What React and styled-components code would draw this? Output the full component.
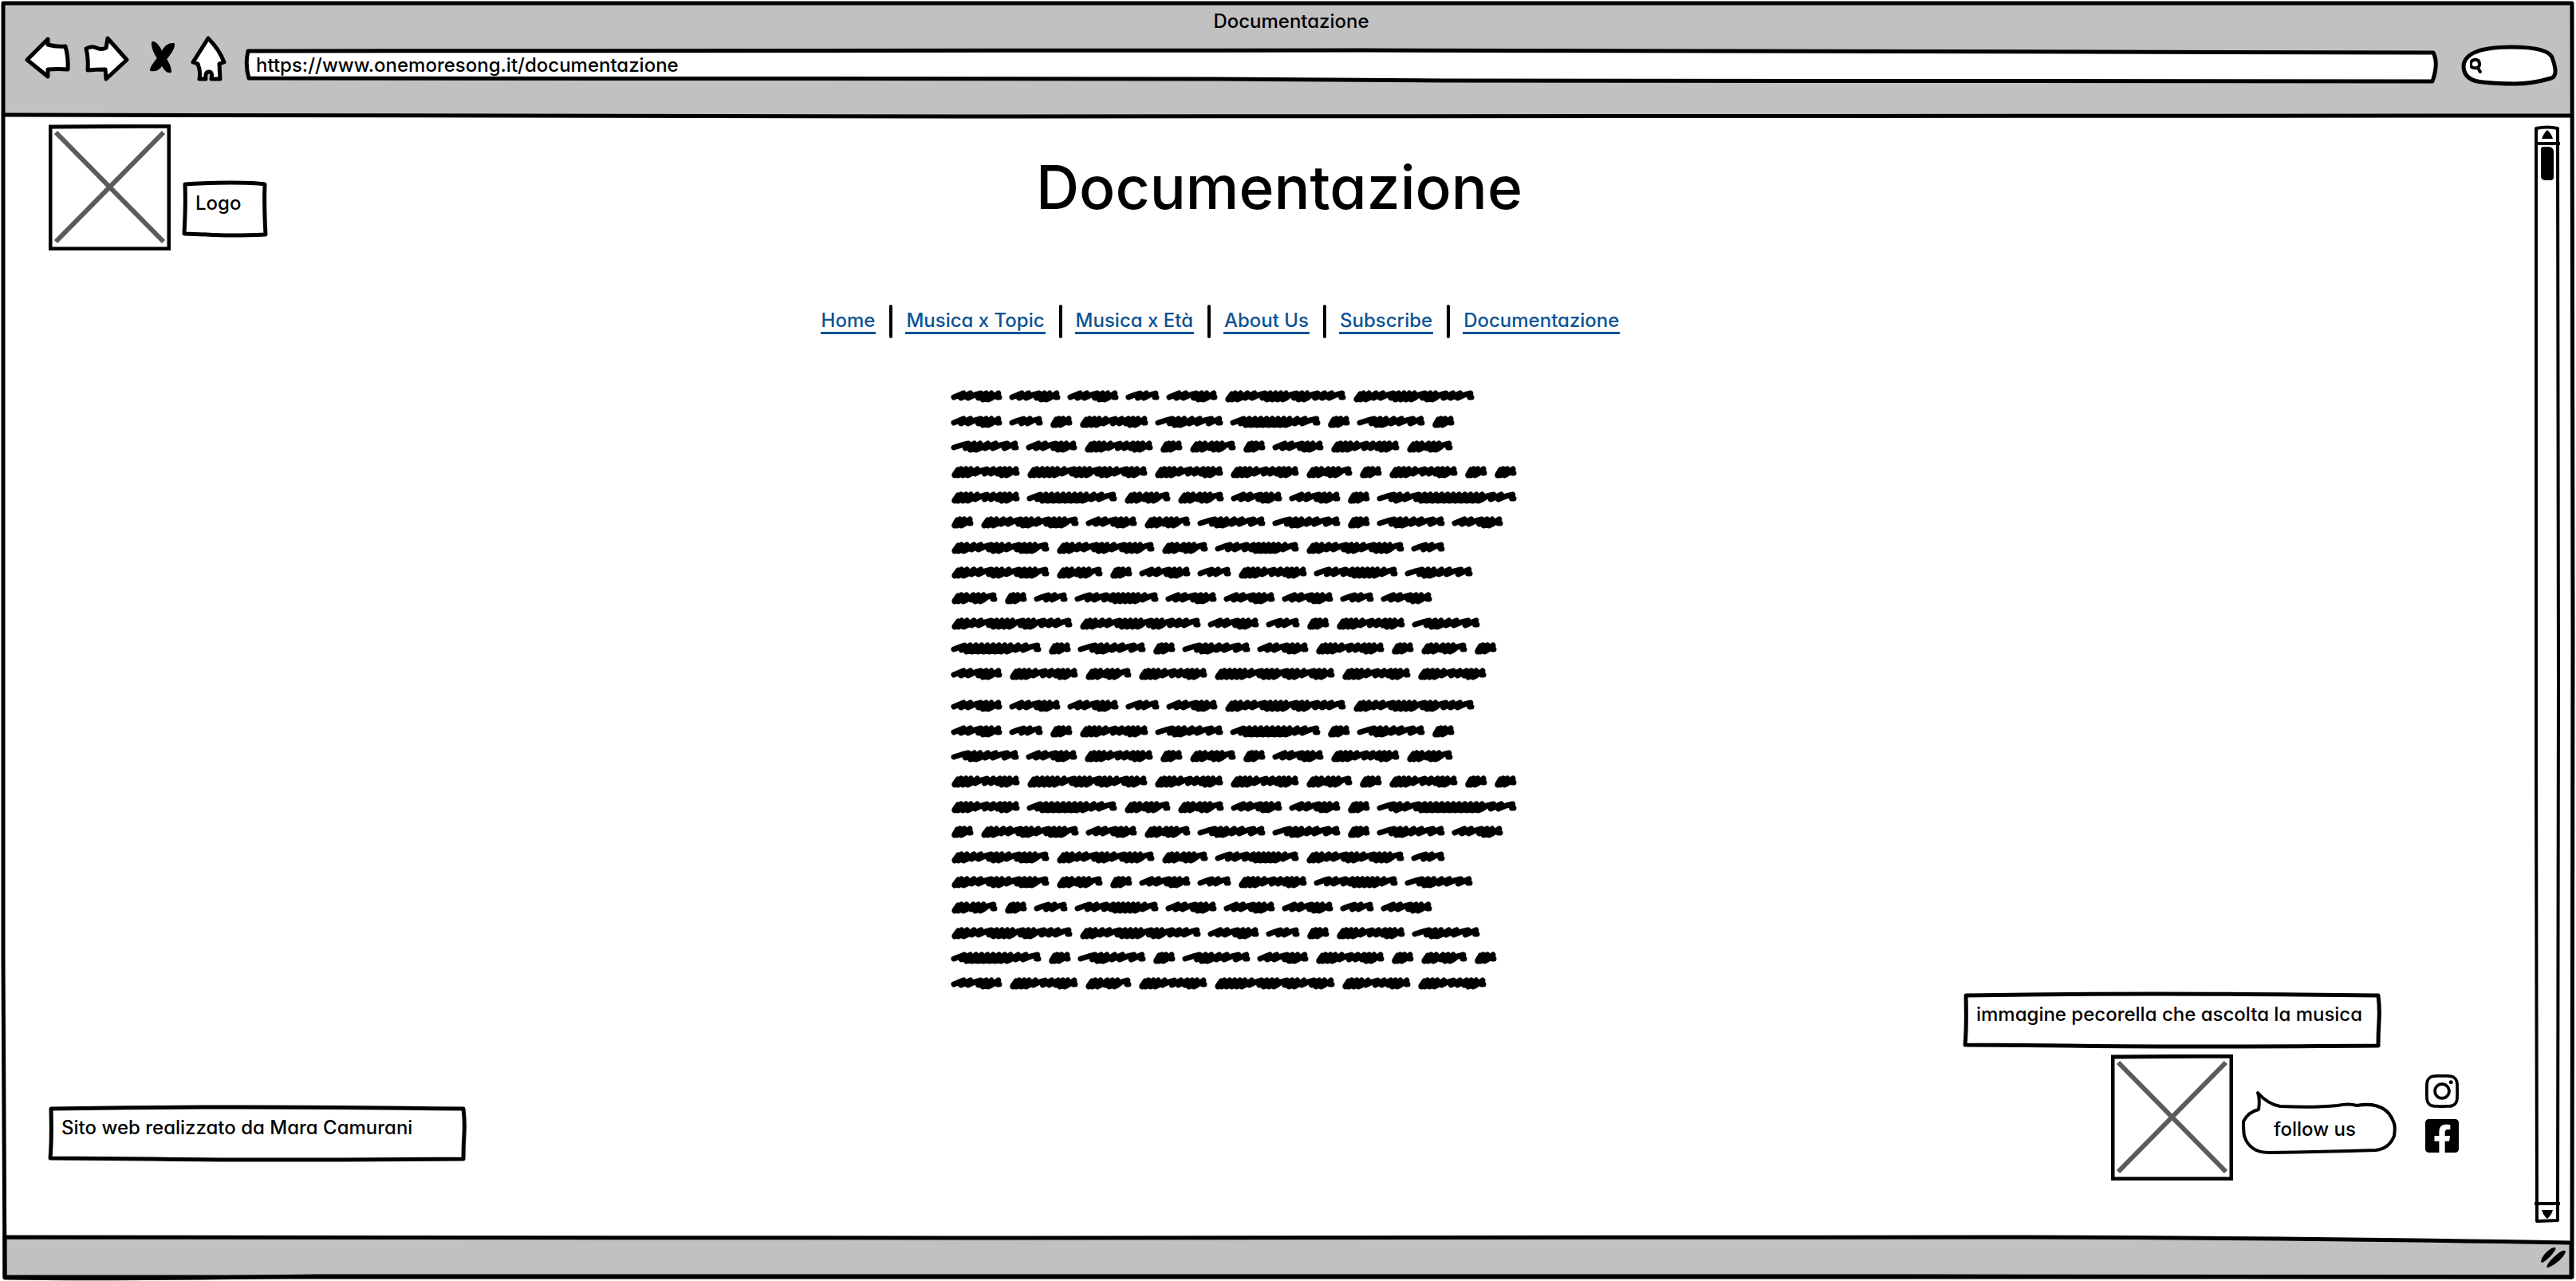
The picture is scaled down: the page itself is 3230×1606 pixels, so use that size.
import React from 'react';
import styled, { createGlobalStyle } from 'styled-components';
import { FaInstagram, FaFacebookSquare } from 'react-icons/fa';

const INK = '#000000';
const CHROME = '#c1c1c1';
const LINK = '#0b5394';

const GlobalStyle = createGlobalStyle`
  *, *::before, *::after { box-sizing: border-box; }
  body {
    margin: 0;
    background: #ffffff;
    color: ${INK};
    font-family: Inter, "Liberation Sans", Arial, sans-serif;
    font-feature-settings: "cv11";
    font-size: 24px;
    font-weight: 500;
    line-height: 32px;
  }
`;

/* Hand-drawn outlines ---------------------------------------------------- */

const OutlineSvg = styled.svg`
  position: absolute;
  inset: 0;
  width: 100%;
  height: 100%;
  overflow: visible;
  pointer-events: none;
  z-index: ${(p) => (p.$behind ? -1 : 1)};
  path {
    fill: ${(p) => p.$fill || 'none'};
    stroke: ${INK};
    stroke-width: ${(p) => p.$weight || 5}px;
    stroke-linejoin: round;
    stroke-linecap: round;
    vector-effect: non-scaling-stroke;
  }
`;

function Outline({ box, d, fill, weight, behind }) {
  return (
    <OutlineSvg
      viewBox={box}
      preserveAspectRatio="none"
      aria-hidden="true"
      $fill={fill}
      $weight={weight}
      $behind={behind}
    >
      <path d={d} />
    </OutlineSvg>
  );
}

/* Browser window ---------------------------------------------------------- */

const Window = styled.div`
  position: relative;
  isolation: isolate;
  display: flex;
  flex-direction: column;
  min-height: 100vh;
  padding: 4px;
`;

const Chrome = styled.header`
  position: relative;
  display: flex;
  flex-direction: column;
  height: 142px;
  padding: 7px 20px 0 28px;
  background: ${CHROME};
`;

const WindowTitle = styled.div`
  text-align: center;
  line-height: 32px;
`;

const Toolbar = styled.div`
  display: flex;
  align-items: flex-start;
`;

const NavButtons = styled.div`
  display: flex;
  align-items: center;
  gap: 18px;
  margin-right: 24px;
`;

const IconButton = styled.button`
  display: block;
  padding: 0;
  border: 0;
  background: none;
  cursor: pointer;
  svg { display: block; overflow: visible; }
`;

const Sketch = styled.path`
  fill: ${(p) => (p.$solid ? INK : '#ffffff')};
  stroke: ${INK};
  stroke-width: ${(p) => p.$weight || 5};
  stroke-linejoin: round;
  stroke-linecap: round;
`;

const AddressField = styled.label`
  position: relative;
  isolation: isolate;
  flex: 1;
  display: flex;
  height: 42px;
  margin: 18px 30px 0 0;
`;

const SearchField = styled.label`
  position: relative;
  isolation: isolate;
  display: flex;
  align-items: center;
  width: 119px;
  height: 50px;
  padding-left: 10px;
  margin-top: 14px;
`;

const BareInput = styled.input`
  width: 100%;
  min-width: 0;
  border: 0;
  outline: 0;
  padding: 0 14px;
  height: 40px;
  background: transparent;
  color: inherit;
  font: inherit;
  font-feature-settings: inherit;
`;

const Body = styled.div`
  flex: 1;
  display: flex;
  background: #ffffff;
`;

const StatusBar = styled.footer`
  display: flex;
  justify-content: flex-end;
  align-items: center;
  height: 51px;
  padding-right: 6px;
  position: relative;
  isolation: isolate;
`;

/* Scroll bar -------------------------------------------------------------- */

const ScrollTrack = styled.div`
  position: relative;
  isolation: isolate;
  display: flex;
  flex-direction: column;
  align-items: center;
  width: 32px;
  margin: 12px 16px 18px 0;
`;

const ScrollThumb = styled.div`
  width: 16px;
  height: 42px;
  margin-top: 2px;
  background: ${INK};
  border-radius: 3px 6px 4px 5px;
`;

const ScrollButton = styled(IconButton)`
  display: flex;
  align-items: center;
  justify-content: center;
  width: 100%;
  height: 24px;
  border: 0 solid ${INK};
  ${(p) => (p.$end ? 'margin-top: auto; border-top-width: 4px; height: 26px;' : 'border-bottom-width: 4px;')}
`;

/* Page -------------------------------------------------------------------- */

const Page = styled.main`
  flex: 1;
  display: flex;
  flex-direction: column;
  padding: 10px 31px 71px 57px;
`;

const TopRow = styled.section`
  display: grid;
  grid-template-columns: 1fr auto 1fr;
  align-items: start;
`;

const Brand = styled.div`
  display: flex;
  align-items: flex-end;
  gap: 15px;
`;

const BrandLabel = styled.div`
  padding-bottom: 17px;
`;

const Title = styled.h1`
  margin: 0;
  padding-top: 33px;
  font-size: 75px;
  font-weight: 500;
  line-height: 92px;
`;

const Picture = styled.svg`
  display: block;
  flex: none;
  width: 153px;
  height: 158px;
`;

const Note = styled.div`
  position: relative;
  isolation: isolate;
  width: ${(p) => (p.$small ? '106px' : '523px')};
  height: 70px;
  padding: 12px 16px;
  white-space: nowrap;
`;

const Menu = styled.nav`
  align-self: center;
  display: flex;
  align-items: center;
  height: 42px;
  margin: 68px 148px 0 0;
`;

const MenuLink = styled.a`
  padding: 0 1px;
  border-bottom: 3px solid ${LINK};
  color: ${LINK};
  line-height: 28px;
  text-decoration: none;
`;

const MenuItem = styled.span`
  display: flex;
  align-items: center;
  & + &::before {
    content: '';
    width: 4px;
    height: 42px;
    margin: 0 16px 0 17px;
    border-radius: 2px;
    background: ${INK};
  }
`;

const Article = styled.section`
  align-self: center;
  display: flex;
  flex-direction: column;
  gap: 26px;
  width: 710px;
  margin: 66px 112px 0 0;
`;

const Paragraph = styled.div`
  display: flex;
  flex-direction: column;
  justify-content: space-between;
  height: 362px;
`;

const Line = styled.div`
  display: flex;
  gap: 9px;
`;

const Word = styled.svg`
  display: block;
  flex: none;
  overflow: visible;
  path {
    fill: none;
    stroke: ${INK};
    stroke-width: 7;
    stroke-linejoin: round;
    stroke-linecap: round;
  }
`;

const BottomRow = styled.section`
  display: flex;
  justify-content: space-between;
  align-items: flex-end;
  margin-top: auto;
  padding-right: 64px;
`;

const Credit = styled.div`
  padding-bottom: 24px;
`;

const Follow = styled.div`
  display: grid;
  grid-template-columns: 185px 153px 11px 194px 36px 42px;
  row-gap: 8px;
`;

const FollowNote = styled.div`
  grid-column: 1 / 5;
`;

const FollowPicture = styled.div`
  grid-column: 2;
`;

const Bubble = styled.div`
  grid-column: 4;
  position: relative;
  isolation: isolate;
  align-self: start;
  height: 79px;
  margin-top: 46px;
  padding: 32px 42px 0 40px;
  white-space: nowrap;
`;

const Social = styled.div`
  grid-column: 6;
  display: flex;
  flex-direction: column;
  gap: 8px;
  padding-top: 22px;
  a {
    display: block;
    height: 48px;
    color: ${INK};
  }
  svg { display: block; margin: 0 -3px; }
`;

/* Scribbled placeholder text ---------------------------------------------- */

const WORDS = {
  A: [64, 'sswdds'],
  B: [42, 'wsw'],
  C: [28, 'Dds'],
  D: [86, 'Dddswssdds'],
  E: [85, 'wddssws'],
  F: [113, 'sddddddddssw'],
  G: [58, 'Ddsddw'],
  H: [152, 'Ddsswddddwddwssw'],
  I: [175, 'wdswdddddddddddwsw'],
  J: [123, 'Ddsswddswdddw'],
  K: [105, 'wswsdddddsw'],
  M: [151, 'Dddddswdddwddswdds'],
};

const LINES = [
  'AAABAHH',
  'ABCDEFCEC',
  'EADCGCADG',
  'DMDDGCDCC',
  'DFGGAACI',
  'CJAGEECEA',
  'JJGKJB',
  'JGCABDKE',
  'GCBKAAABA',
  'HHABCDE',
  'FCECEADCGC',
  'ADGDMDD',
];

function scribble(kind) {
  const [width, steps] = WORDS[kind];
  const pts = [];
  let x = 0;
  if (steps[0] === 'D') pts.push([1, 10], [5, 4], [1, 11], [6, 9]);
  else pts.push([0, 8]);
  for (const step of steps) {
    if (step === 'w') {
      pts.push([x + 8, 5], [x + 15, 3]);
      x += 12;
      pts.push([x, 9]);
    } else if (step === 's') {
      pts.push([x + 11, 3]);
      x += 8;
      pts.push([x, 9]);
    } else {
      pts.push([x + 9, 3]);
      x += 6;
      pts.push([x - 1, 11], [x + 3, 9]);
    }
  }
  pts.pop();
  const last = pts[pts.length - 1];
  pts.push([last[0] - 1, 8], [last[0] + 1, 8]);
  const span = last[0] + 1;
  const scale = (width - 7) / span;
  return pts.map(([px, py], i) => `${i ? 'L' : 'M'}${(3 + px * scale).toFixed(1)} ${py}`).join('');
}

const SHAPES = Object.fromEntries(Object.keys(WORDS).map((k) => [k, scribble(k)]));

function ScribbleParagraph() {
  return (
    <Paragraph role="img" aria-label="Testo">
      {LINES.map((line, i) => (
        <Line key={i}>
          {[...line].map((kind, j) => (
            <Word key={j} width={WORDS[kind][0]} height="14" viewBox={`0 0 ${WORDS[kind][0]} 14`}>
              <path d={SHAPES[kind]} />
            </Word>
          ))}
        </Line>
      ))}
    </Paragraph>
  );
}

/* Parts ------------------------------------------------------------------- */

function PicturePlaceholder({ label }) {
  return (
    <Picture viewBox="0 0 153 158" role="img" aria-label={label}>
      <path d="M2 3L151 2V156H2Z" fill="#fff" stroke={INK} strokeWidth="5" />
      <path d="M9 10L144 147M144 10L9 147" stroke="#5b5b5b" strokeWidth="6" fill="none" />
    </Picture>
  );
}

function NoteBox({ small, children }) {
  const d = small
    ? 'M3 4Q30 2 60 2T103 4Q102 30 104 67Q60 69 30 67L2 66Q4 30 3 4Z'
    : 'M3 4Q120 2 240 2T520 4Q522 20 521 36T520 67Q260 69 130 67L2 66Q4 44 3 4Z';
  return (
    <Note $small={small}>
      <Outline behind box={small ? '0 0 106 70' : '0 0 523 70'} d={d} fill="#fff" />
      {children}
    </Note>
  );
}

const MENU = ['Home', 'Musica x Topic', 'Musica x Età', 'About Us', 'Subscribe', 'Documentazione'];

export default function App() {
  return (
    <>
      <GlobalStyle />
      <Window>
        <Outline
          box="0 0 3230 1606"
          d="M4 4L3225 4L3226 800L3225 1601Q2800 1602 2400 1600L400 1600Q150 1604 6 1602L4 1200Z"
        />
        <Chrome>
          <Outline box="0 0 3222 142" d="M2 140Q400 142 1200 142T3220 141" />
          <WindowTitle>Documentazione</WindowTitle>
          <Toolbar>
            <NavButtons>
              <IconButton aria-label="Indietro">
                <svg width="55" height="60" viewBox="0 2 55 60">
                  <Sketch d="M28 8L2 34L28 55V46Q41 45 53 46Q54 32 50 17Q38 18 28 15Z" />
                </svg>
              </IconButton>
              <IconButton aria-label="Avanti">
                <svg width="55" height="60" viewBox="-1 2 55 60">
                  <Sketch d="M29 7L53 34L27 58L26 46Q14 46 4 47Q5 32 2 20Q9 16 15 19T27 19Z" />
                </svg>
              </IconButton>
              <IconButton aria-label="Interrompi">
                <svg width="43" height="60" viewBox="-10 1 43 60">
                  <Sketch $solid $weight={2} d="M3 11Q9 10 15 24Q20 12 30 13Q31 19 20 32Q26 41 26 48Q21 50 15 39Q10 48 1 46Q1 42 10 31Q2 19 3 11Z" />
                </svg>
              </IconButton>
              <IconButton aria-label="Pagina iniziale">
                <svg width="44" height="60" viewBox="0 1 44 60">
                  <Sketch d="M22 6L3 36L9 38Q13 48 11 57H19Q18 48 23 48T26 57H37L36 38L42 36Q36 20 22 6Z" />
                </svg>
              </IconButton>
            </NavButtons>
            <AddressField>
              <Outline
                behind
                fill="#fff"
                box="0 0 2747 42"
                d="M4 3L1400 2L2741 5Q2748 18 2740 41L1500 40L1200 38L5 37Q0 20 4 3Z"
              />
              <BareInput aria-label="Indirizzo" defaultValue="https://www.onemoresong.it/documentazione" />
            </AddressField>
            <SearchField>
              <Outline
                behind
                fill="#fff"
                box="0 0 119 50"
                d="M26 46Q3 44 2 27Q2 2 62 2Q112 2 114 18Q121 38 112 41Q88 48 66 48T26 46Z"
              />
              <svg width="20" height="24" viewBox="0 0 20 24" aria-hidden="true">
                <path d="M8 3Q15 3 15 10Q15 16 8 16Q1 16 1 10T8 3ZM12 15L16 22" fill="none" stroke={INK} strokeWidth="5" strokeLinecap="round" />
              </svg>
              <BareInput aria-label="Cerca" />
            </SearchField>
          </Toolbar>
        </Chrome>
        <Body>
          <Page>
            <TopRow>
              <Brand>
                <PicturePlaceholder label="Logo" />
                <BrandLabel>
                  <NoteBox small>Logo</NoteBox>
                </BrandLabel>
              </Brand>
              <Title>Documentazione</Title>
            </TopRow>
            <Menu>
              {MENU.map((item) => (
                <MenuItem key={item}>
                  <MenuLink href="#">{item}</MenuLink>
                </MenuItem>
              ))}
            </Menu>
            <Article>
              <ScribbleParagraph />
              <ScribbleParagraph />
            </Article>
            <BottomRow>
              <Credit>
                <NoteBox>Sito web realizzato da Mara Camurani</NoteBox>
              </Credit>
              <Follow>
                <FollowNote>
                  <NoteBox>immagine pecorella che ascolta la musica</NoteBox>
                </FollowNote>
                <FollowPicture>
                  <PicturePlaceholder label="Pecorella" />
                </FollowPicture>
                <Bubble>
                  <Outline
                    behind
                    fill="#fff"
                    weight={4}
                    box="0 0 194 79"
                    d="M48 19Q90 21 120 18Q134 15 144 18Q180 12 190 38Q193 44 191 56Q185 72 168 74Q100 76 36 77Q10 78 3 56Q2 50 2 38Q8 26 21 23Q23 10 20 2Q32 16 48 19Z"
                  />
                  follow us
                </Bubble>
                <Social>
                  <a href="#" aria-label="Instagram"><FaInstagram size={48} /></a>
                  <a href="#" aria-label="Facebook"><FaFacebookSquare size={48} /></a>
                </Social>
              </Follow>
            </BottomRow>
          </Page>
          <ScrollTrack>
            <Outline behind weight={4} box="0 0 32 1374" d="M2 3Q16 0 29 3L30 700L29 1371L3 1372L2 800Z" />
            <ScrollButton aria-label="Scorri in alto">
              <svg width="14" height="11" viewBox="0 0 14 11"><path d="M0 11Q3 3 7 0Q12 4 14 11Z" /></svg>
            </ScrollButton>
            <ScrollThumb />
            <ScrollButton $end aria-label="Scorri in basso">
              <svg width="14" height="11" viewBox="0 0 14 11"><path d="M0 0H14Q12 7 7 11Q2 7 0 0Z" /></svg>
            </ScrollButton>
          </ScrollTrack>
        </Body>
        <StatusBar>
          <Outline behind fill={CHROME} box="0 0 3222 51" d="M2 0Q400 2 1200 1L2500 0Q2900 1 3220 7V50H2Z" />
          <svg width="34" height="28" viewBox="0 0 34 28" aria-hidden="true">
            <path d="M0 19Q1 10 13 2Q20 -1 18 4Q12 14 2 20ZM7 26Q8 19 22 8Q31 2 31 7Q26 18 10 26Z" />
          </svg>
        </StatusBar>
      </Window>
    </>
  );
}
